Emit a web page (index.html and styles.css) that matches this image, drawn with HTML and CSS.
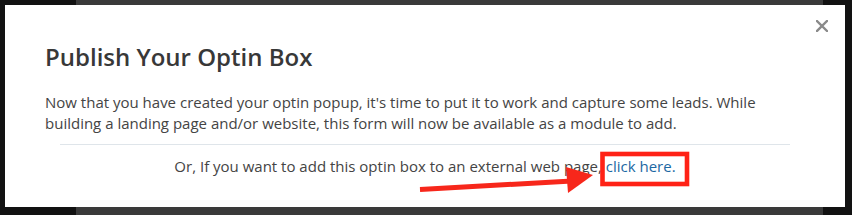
FILE: index.html
```html
<!DOCTYPE html>
<html lang="en">
<head>
    <meta charset="UTF-8">
    <meta name="viewport" content="width=device-width, initial-scale=1.0">
    <title>Publish Your Optin Box</title>
    <link rel="stylesheet" href="styles.css">
</head>
<body>
    <div class="page">
        <div class="page-panel"></div>
    </div>

    <div class="modal">
        <button class="close-btn" aria-label="Close">
            <svg width="12" height="12" viewBox="0 0 12 12">
                <path d="M1 1 L11 11 M11 1 L1 11" stroke="#8a8a8a" stroke-width="2.4" stroke-linecap="square"/>
            </svg>
        </button>
        <h1>Publish Your Optin Box</h1>
        <p class="intro">Now that you have created your optin popup, it's time to put it to work and capture some leads. While building a landing page and/or website, this form will now be available as a module to add.</p>
        <div class="external">
            <p>Or, If you want to add this optin box to an external web page, <a href="#">click here.</a></p>
        </div>
    </div>

    <svg class="annotation" width="852" height="215" viewBox="0 0 852 215">
        <line x1="420" y1="189.5" x2="572" y2="181" stroke="#f7271b" stroke-width="5"/>
        <polygon points="566,167 593,175 568,193" fill="#f7271b"/>
        <rect x="602.5" y="154" width="84.5" height="30" fill="none" stroke="#ff2216" stroke-width="4.6"/>
    </svg>
</body>
</html>
```

FILE: styles.css
```css
html, body {
    margin: 0;
    padding: 0;
}

body {
    width: 852px;
    height: 215px;
    overflow: hidden;
    background-color: #121212;
    font-family: "Open Sans", Arial, sans-serif;
    position: relative;
}

.page {
    display: flex;
    height: 100%;
}

.page-panel {
    margin-left: 76px;
    width: 747px;
    background-color: #3a3a3a;
}

.modal {
    position: absolute;
    top: 5px;
    left: 5px;
    width: 840px;
    height: 202px;
    box-sizing: border-box;
    background-color: #fff;
    padding: 39px 40px 0 40px;
}

.close-btn {
    position: absolute;
    top: 15px;
    right: 17px;
    background: none;
    border: none;
    padding: 0;
    cursor: pointer;
    line-height: 0;
}

h1 {
    margin: 0;
    font-size: 24px;
    font-weight: 600;
    line-height: 26px;
    color: #383838;
}

.intro {
    margin: 22px 0 0 0;
    font-size: 15px;
    line-height: 21px;
    color: #444;
}

.external {
    margin: 10px 15px 0 15px;
    border-top: 1px solid #dfe5ea;
    padding-top: 11px;
    text-align: center;
}

.external p {
    margin: 0;
    font-size: 15px;
    line-height: 21px;
    color: #444;
}

.external a {
    color: #1c68a3;
    text-decoration: none;
}

.annotation {
    position: absolute;
    top: 0;
    left: 0;
    pointer-events: none;
}
```
